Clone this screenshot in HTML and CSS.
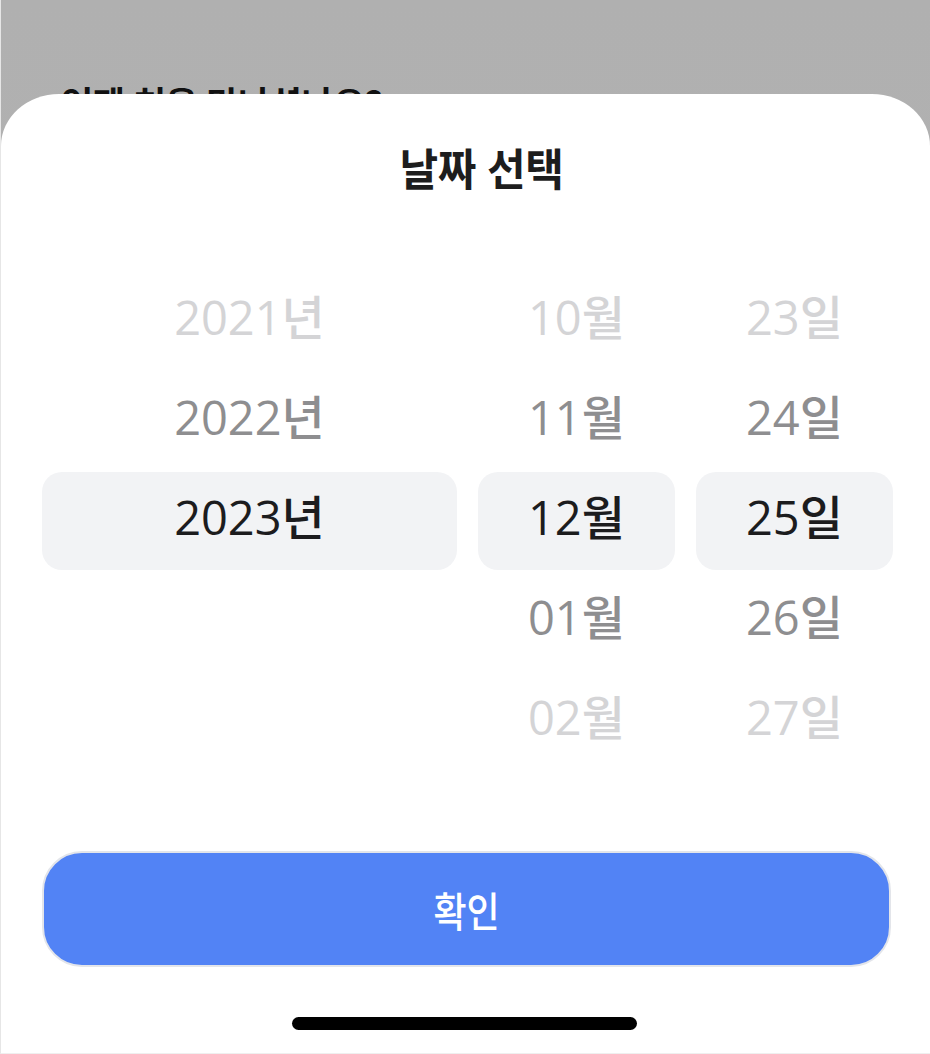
FILE: index.html
```html
<!DOCTYPE html>
<html lang="ko">
<head>
<meta charset="utf-8">
<title>날짜 선택</title>
<link rel="stylesheet" href="styles.css">
</head>
<body>
<div class="screen">
  <div class="backdrop">
    <h1 class="question">언제 처음 만나셨나요?</h1>
  </div>
  <div class="sheet">
    <h2 class="sheet-title"><span class="title-text">날짜 선택</span></h2>
    <div class="picker">
      <div class="col">
        <div class="item far">2021년</div>
        <div class="item near">2022년</div>
        <div class="item selected">2023년</div>
        <div class="item"></div>
        <div class="item"></div>
      </div>
      <div class="col">
        <div class="item far">10월</div>
        <div class="item near">11월</div>
        <div class="item selected">12월</div>
        <div class="item near">01월</div>
        <div class="item far">02월</div>
      </div>
      <div class="col">
        <div class="item far">23일</div>
        <div class="item near">24일</div>
        <div class="item selected">25일</div>
        <div class="item near">26일</div>
        <div class="item far">27일</div>
      </div>
    </div>
    <button class="confirm" type="button"><span class="confirm-text">확인</span></button>
    <div class="home-indicator"></div>
  </div>
</div>
</body>
</html>
```

FILE: styles.css
```css
* { box-sizing: border-box; }

html, body {
  margin: 0;
  padding: 0;
}

body {
  width: 930px;
  height: 1054px;
  overflow: hidden;
  font-family: "Noto Sans CJK KR", "Noto Sans", sans-serif;
  background: #b2b2b2;
}

.screen {
  position: relative;
  width: 930px;
  height: 1054px;
  border-left: 1px solid #e6e6e6;
  border-bottom: 1px solid #efefef;
  background: linear-gradient(#b0b0b0, #b4b4b4);
}

.backdrop {
  padding: 81px 0 0 60px;
}

.question {
  margin: 0;
  font-size: 35px;
  line-height: 42px;
  font-weight: 700;
  color: #111;
  letter-spacing: -0.5px;
}

.sheet {
  position: absolute;
  left: 0;
  right: 0;
  top: 94px;
  bottom: 0;
  background: #fff;
  border-radius: 58px 58px 0 0 / 52px 52px 0 0;
  display: flex;
  flex-direction: column;
  align-items: stretch;
}

.sheet-title {
  margin: 0;
  padding: 48px 0 0 32px;
  height: 126px;
  text-align: center;
  font-size: 42px;
  line-height: 50px;
  font-weight: 700;
  color: #1d1d1d;
  letter-spacing: -0.5px;
}

.title-text {
  display: inline-block;
  transform: scaleY(1.06);
}

.picker {
  margin-top: 50px;
  padding: 0 38px 0 41px;
  display: grid;
  grid-template-columns: 415px 197px 197px;
  column-gap: 21px;
}

.col {
  display: flex;
  flex-direction: column;
}

.item {
  height: 100px;
  display: flex;
  align-items: center;
  justify-content: center;
  padding-bottom: 6px;
  font-family: "Open Sans", "Noto Sans CJK KR", sans-serif;
  font-size: 47px;
  line-height: 1;
  font-weight: 500;
}

.item.far { color: #d4d4d6; }
.item.near { color: #8e8e90; }
.item.selected {
  color: #1c1c1e;
  background: #f2f3f5;
  border-radius: 20px;
  margin: 2px 0 0;
  height: 98px;
  padding-bottom: 8px;
}

.confirm {
  margin: 81px 39px 0 41px;
  height: 116px;
  border: 2px solid #e3e5ea;
  border-radius: 40px;
  background: #5283f5;
  color: #fff;
  font-family: inherit;
  font-size: 36px;
  font-weight: 500;
  cursor: pointer;
}

.confirm-text {
  display: inline-block;
  transform: scaleY(1.15);
}

.home-indicator {
  align-self: center;
  margin-top: 50px;
  margin-left: -3px;
  width: 345px;
  height: 13px;
  border-radius: 7px;
  background: #000;
}
```
